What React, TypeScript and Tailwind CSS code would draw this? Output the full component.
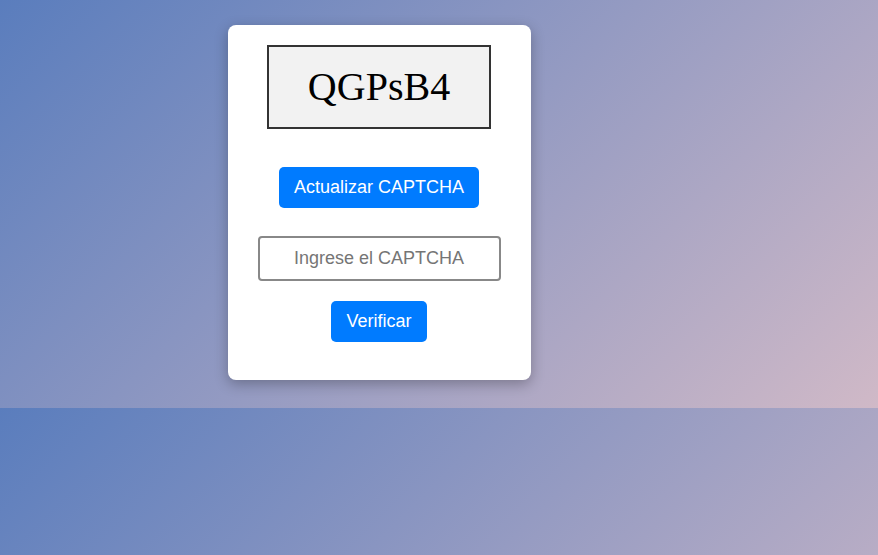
export default function App() {
  return (
    <div className="h-[555px] w-full bg-[linear-gradient(135deg,#5a7dbd,#d0b9c7)] bg-[length:100%_408px] bg-repeat font-['Liberation_Sans',Arial,sans-serif]">
      <div className="pt-[25px] pl-[228px]">
        <div className="flex w-[303px] h-[355px] flex-col items-center rounded-lg bg-white pt-5 pr-px shadow-[0_4px_14px_rgba(0,0,0,0.28)]">
          <div className="flex h-[84px] w-[224px] items-center justify-center border-2 border-[#333] bg-[#f2f2f2]">
            <span className="font-['Liberation_Serif','Times_New_Roman',serif] text-[40px] leading-none text-black">
              QGPsB4
            </span>
          </div>

          <button className="mt-[38px] h-[41px] w-[200px] rounded-[5px] bg-[#007bff] text-[18px] text-white">
            Actualizar CAPTCHA
          </button>

          <input
            type="text"
            placeholder="Ingrese el CAPTCHA"
            className="mt-[28px] h-[45px] w-[243px] rounded-[4px] border-2 border-[#888] bg-white text-center text-[18px] text-black outline-none placeholder:text-[#757575]"
          />

          <button className="mt-5 h-[41px] w-[96px] rounded-[5px] bg-[#007bff] text-[18px] text-white">
            Verificar
          </button>
        </div>
      </div>
    </div>
  );
}
